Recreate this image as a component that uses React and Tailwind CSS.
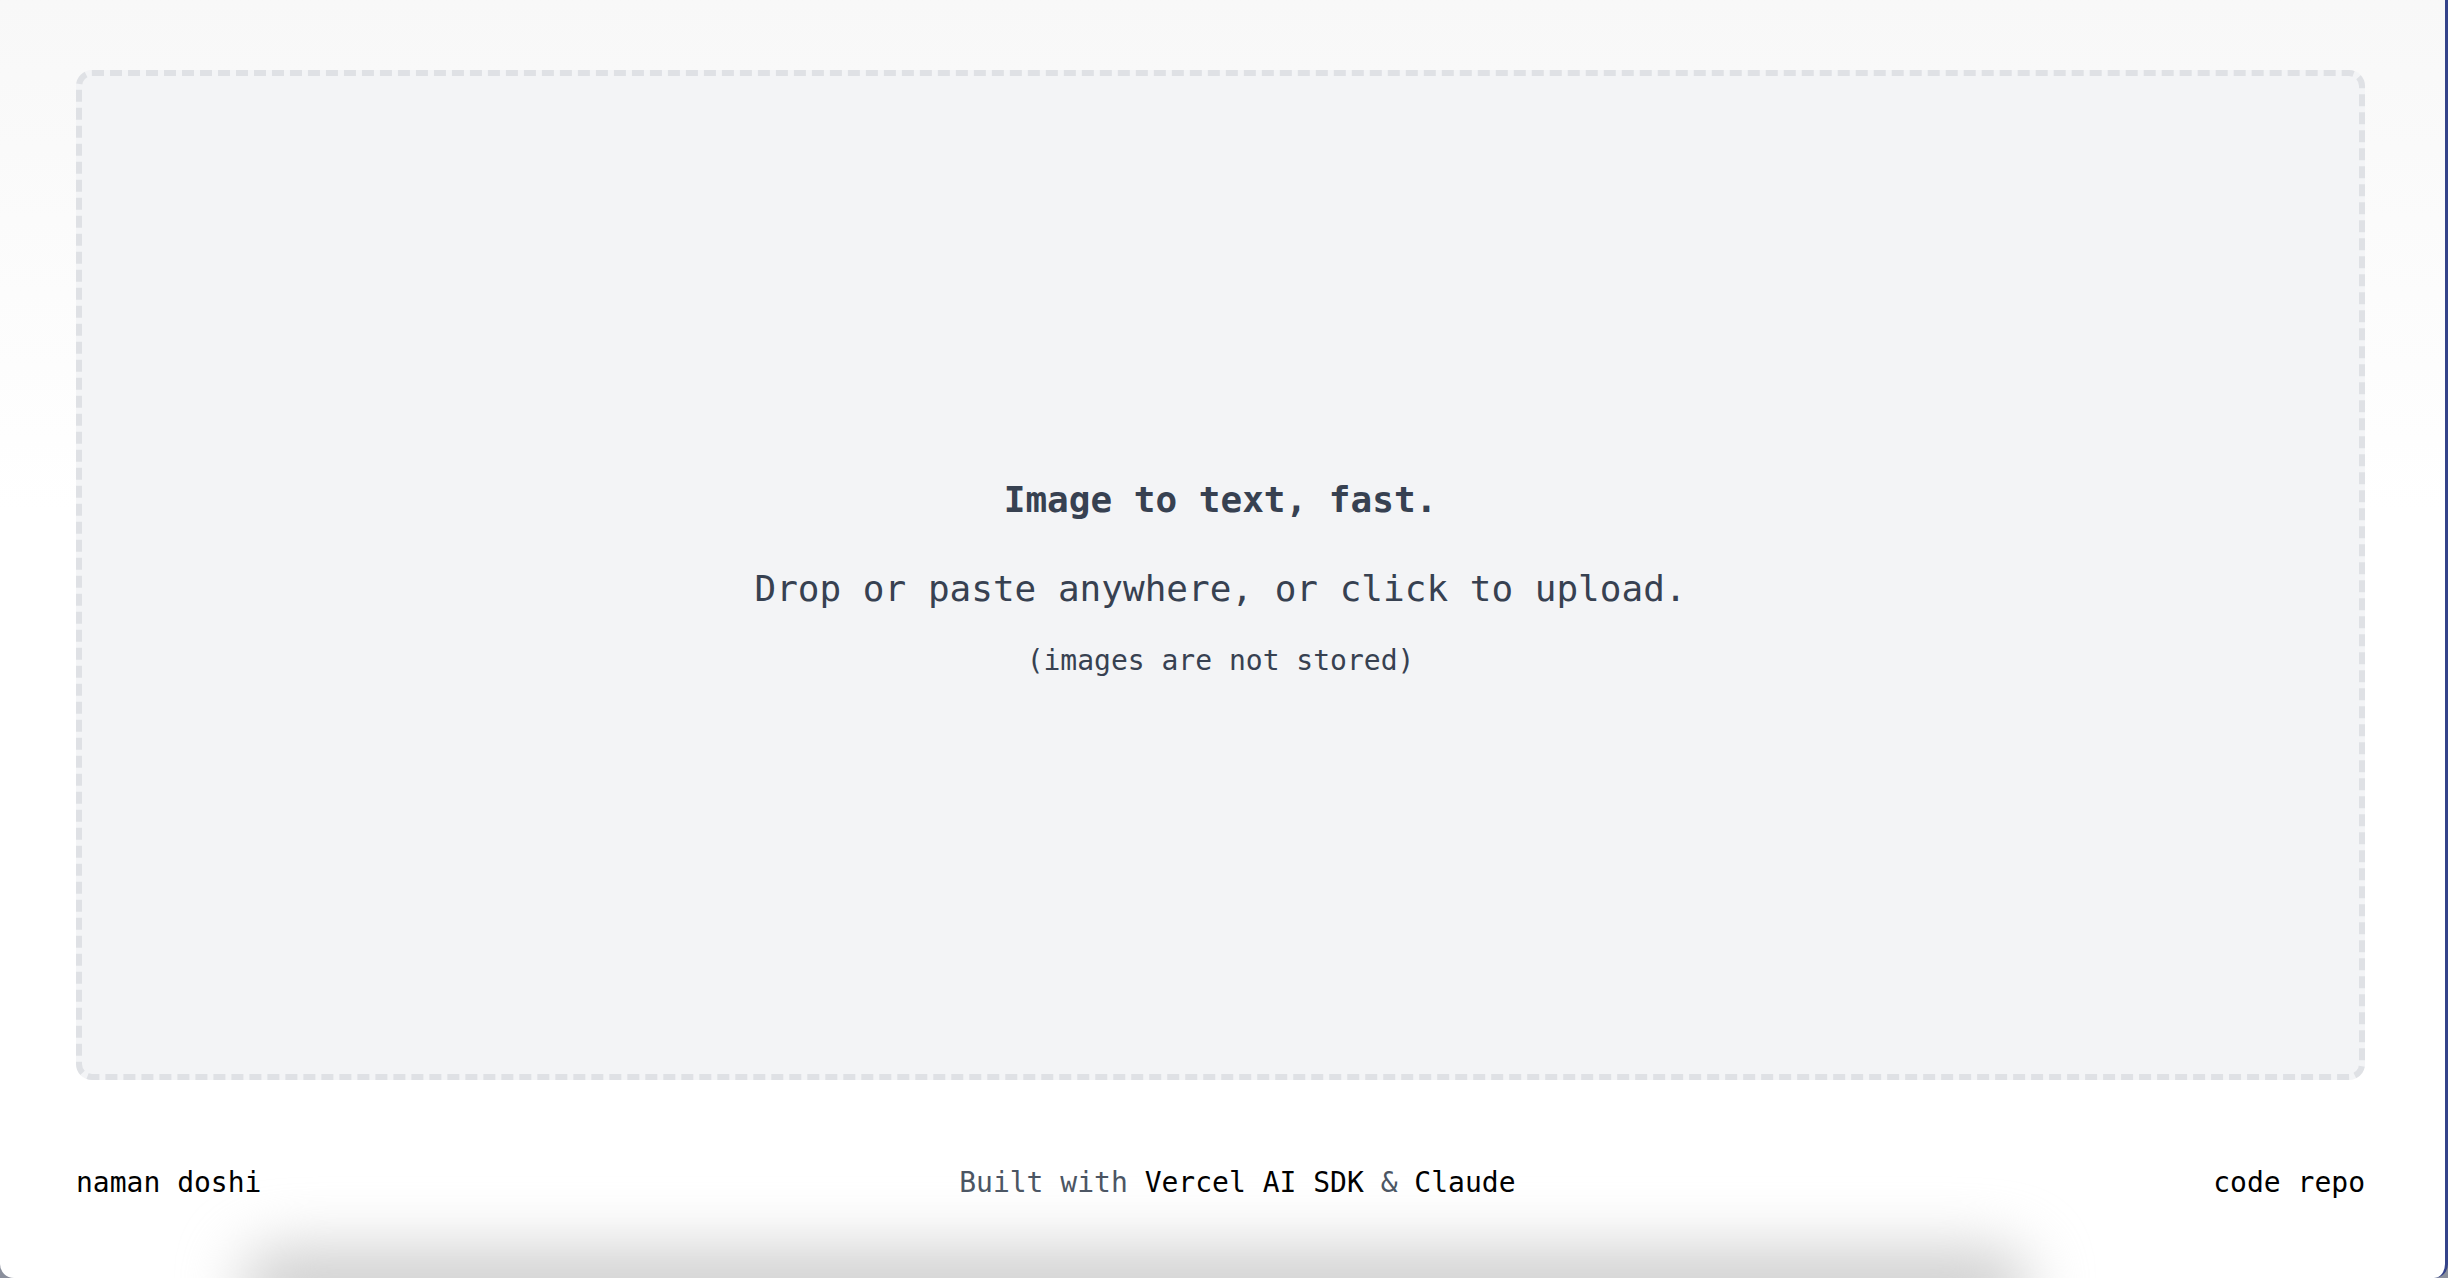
import React from 'react';

export default function App() {
  const mono = { fontFamily: '"DejaVu Sans Mono", "Liberation Mono", monospace' };

  return (
    <div className="h-screen w-full bg-[#8a8f9c] flex overflow-hidden" style={mono}>
      <div className="relative flex-1 flex flex-col bg-linear-to-b from-[#f8f8f8] via-white via-40% to-white rounded-b-[14px] border-r-[3px] border-[#34438a] overflow-hidden">
        {/* Drop zone */}
        <div className="mt-[70px] ml-[76px] mr-[80px] h-[1010px] pt-[4px] rounded-[16px] border-[6px] border-dashed border-[#dfe1e5] bg-[#f3f4f6] flex flex-col items-center justify-center text-[#374151] cursor-pointer">
          <p className="text-[36px] leading-[54px] font-bold">Image to text, fast.</p>
          <p className="text-[36px] leading-[54px] mt-[35px]">Drop or paste anywhere, or click to upload.</p>
          <p className="text-[28px] leading-[42px] mt-[24px]">(images are not stored)</p>
        </div>

        {/* Footer */}
        <footer className="mt-[82px] ml-[76px] mr-[80px] flex items-center justify-between text-[28px] leading-[42px] text-black">
          <a>naman doshi</a>
          <p className="text-[#4b5563]">
            Built with <a className="text-black">Vercel AI SDK</a> &amp; <a className="text-black">Claude</a>
          </p>
          <a>code repo</a>
        </footer>

        {/* bottom shadow */}
        <div className="pointer-events-none absolute left-[240px] bottom-[-50px] w-[1790px] h-[80px] rounded-full bg-[#cfcfcf] blur-[30px]"></div>
      </div>
    </div>
  );
}
